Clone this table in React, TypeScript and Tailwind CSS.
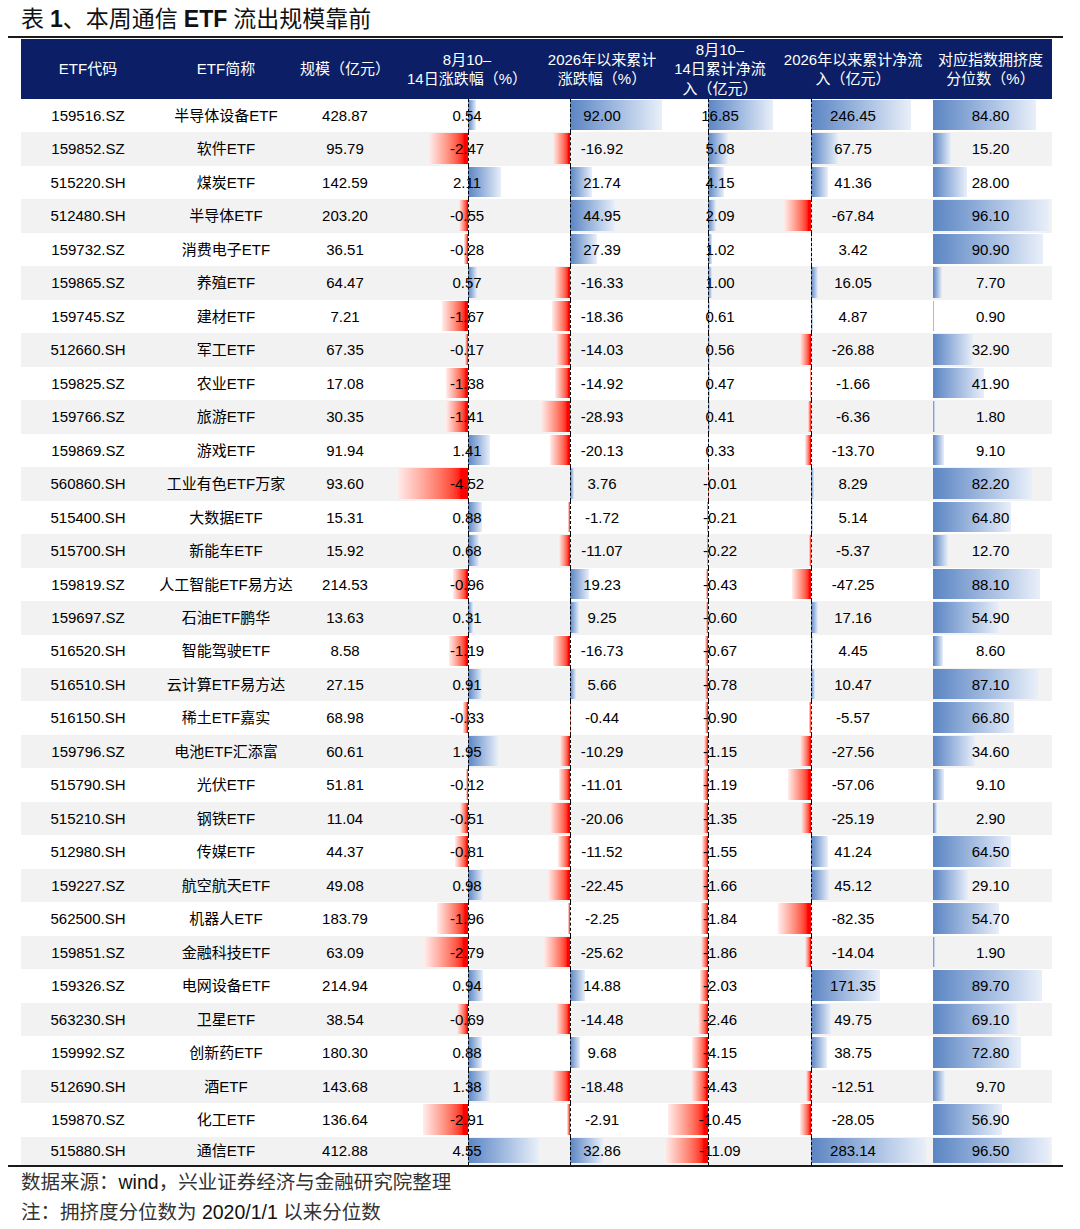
type Row = [string, string, string, number, number, number, number, number];

const rows: Row[] = [
  ["159516.SZ", "半导体设备ETF", "428.87", 0.54, 92.0, 16.85, 246.45, 84.8],
  ["159852.SZ", "软件ETF", "95.79", -2.47, -16.92, 5.08, 67.75, 15.2],
  ["515220.SH", "煤炭ETF", "142.59", 2.11, 21.74, 4.15, 41.36, 28.0],
  ["512480.SH", "半导体ETF", "203.20", -0.55, 44.95, 2.09, -67.84, 96.1],
  ["159732.SZ", "消费电子ETF", "36.51", -0.28, 27.39, 1.02, 3.42, 90.9],
  ["159865.SZ", "养殖ETF", "64.47", 0.57, -16.33, 1.0, 16.05, 7.7],
  ["159745.SZ", "建材ETF", "7.21", -1.67, -18.36, 0.61, 4.87, 0.9],
  ["512660.SH", "军工ETF", "67.35", -0.17, -14.03, 0.56, -26.88, 32.9],
  ["159825.SZ", "农业ETF", "17.08", -1.38, -14.92, 0.47, -1.66, 41.9],
  ["159766.SZ", "旅游ETF", "30.35", -1.41, -28.93, 0.41, -6.36, 1.8],
  ["159869.SZ", "游戏ETF", "91.94", 1.41, -20.13, 0.33, -13.7, 9.1],
  ["560860.SH", "工业有色ETF万家", "93.60", -4.52, 3.76, -0.01, 8.29, 82.2],
  ["515400.SH", "大数据ETF", "15.31", 0.88, -1.72, -0.21, 5.14, 64.8],
  ["515700.SH", "新能车ETF", "15.92", 0.68, -11.07, -0.22, -5.37, 12.7],
  ["159819.SZ", "人工智能ETF易方达", "214.53", -0.96, 19.23, -0.43, -47.25, 88.1],
  ["159697.SZ", "石油ETF鹏华", "13.63", 0.31, 9.25, -0.6, 17.16, 54.9],
  ["516520.SH", "智能驾驶ETF", "8.58", -1.19, -16.73, -0.67, 4.45, 8.6],
  ["516510.SH", "云计算ETF易方达", "27.15", 0.91, 5.66, -0.78, 10.47, 87.1],
  ["516150.SH", "稀土ETF嘉实", "68.98", -0.33, -0.44, -0.9, -5.57, 66.8],
  ["159796.SZ", "电池ETF汇添富", "60.61", 1.95, -10.29, -1.15, -27.56, 34.6],
  ["515790.SH", "光伏ETF", "51.81", -0.12, -11.01, -1.19, -57.06, 9.1],
  ["515210.SH", "钢铁ETF", "11.04", -0.51, -20.06, -1.35, -25.19, 2.9],
  ["512980.SH", "传媒ETF", "44.37", -0.81, -11.52, -1.55, 41.24, 64.5],
  ["159227.SZ", "航空航天ETF", "49.08", 0.98, -22.45, -1.66, 45.12, 29.1],
  ["562500.SH", "机器人ETF", "183.79", -1.96, -2.25, -1.84, -82.35, 54.7],
  ["159851.SZ", "金融科技ETF", "63.09", -2.79, -25.62, -1.86, -14.04, 1.9],
  ["159326.SZ", "电网设备ETF", "214.94", 0.94, 14.88, -2.03, 171.35, 89.7],
  ["563230.SH", "卫星ETF", "38.54", -0.69, -14.48, -2.46, 49.75, 69.1],
  ["159992.SZ", "创新药ETF", "180.30", 0.88, 9.68, -4.15, 38.75, 72.8],
  ["512690.SH", "酒ETF", "143.68", 1.38, -18.48, -4.43, -12.51, 9.7],
  ["159870.SZ", "化工ETF", "136.64", -2.91, -2.91, -10.45, -28.05, 56.9],
  ["515880.SH", "通信ETF", "412.88", 4.55, 32.86, -11.09, 283.14, 96.5],
];

// data-bar columns: width class, axis offset (px) and px per unit
const barCols = [
  { w: "w-[148px]", axisCls: "left-[75px]", ax: 75, scale: 15.6 },
  { w: "w-[122px]", axisCls: "left-[29px]", ax: 29, scale: 1.0 },
  { w: "w-[114px]", axisCls: "left-[45px]", ax: 45, scale: 3.87 },
  { w: "w-[152px]", axisCls: "left-[34px]", ax: 34, scale: 0.405 },
  { w: "w-[123px]", axisCls: "", ax: 4, scale: 1.21 },
];

const headers = [
  { w: "w-[134px]", lines: ["ETF代码"] },
  { w: "w-[142px]", lines: ["ETF简称"] },
  { w: "w-[96px]", lines: ["规模（亿元）"] },
  { w: "w-[148px]", lines: ["8月10–", "14日涨跌幅（%）"] },
  { w: "w-[122px]", lines: ["2026年以来累计", "涨跌幅（%）"] },
  { w: "w-[114px]", lines: ["8月10–", "14日累计净流", "入（亿元）"] },
  { w: "w-[152px]", lines: ["2026年以来累计净流", "入（亿元）"] },
  { w: "w-[123px]", lines: ["对应指数拥挤度", "分位数（%）"] },
];

function BarCell({ value, col }: { value: number; col: (typeof barCols)[number] }) {
  const len = Math.abs(value) * col.scale;
  const neg = value < 0;
  return (
    <div className={`relative h-full shrink-0 ${col.w}`}>
      {len > 0 && (
        <div
          className={`absolute top-[1px] bottom-[2px] ${
            neg
              ? "bg-linear-to-l from-[#ff0000] from-10% to-[#ffeded]"
              : "bg-linear-to-r from-[#5b85c3] to-[#e9eff9]"
          }`}
          style={{ left: neg ? col.ax - len : col.ax, width: Math.max(len, 1) }}
        />
      )}
      {col.axisCls && (
        <div className={`absolute top-0 bottom-0 ${col.axisCls} border-l border-dashed border-black`} />
      )}
      <div className="relative flex h-full items-center justify-center pt-[1px]">{value.toFixed(2)}</div>
    </div>
  );
}

export default function App() {
  return (
    <div className="h-[1229px] w-[1080px] bg-white font-['Liberation_Sans','Noto_Sans_CJK_SC',sans-serif] text-black">
      {/* Title */}
      <div className="flex h-[36px] items-center pl-[21px] pt-[2px] text-[23px] text-[#111]">
        表 <span className="ml-[6px] font-bold">1</span>、本周通信 <span className="mx-[6px] font-bold">ETF</span> 流出规模靠前
      </div>
      <div className="ml-[8px] h-[2px] w-[1055px] bg-[#1a1a1a]" />

      {/* Table */}
      <div className="ml-[21px] mt-[1px] w-[1031px]">
        <div className="flex h-[60px] bg-[#0c1f66] text-[15px] leading-[19.5px] text-white">
          {headers.map((h, i) => (
            <div key={i} className={`flex shrink-0 flex-col items-center justify-center text-center ${h.w}`}>
              {h.lines.map((l, j) => (
                <span key={j}>{l}</span>
              ))}
            </div>
          ))}
        </div>

        {rows.map((r, i) => (
          <div
            key={r[0]}
            className={`flex text-[15px] ${i === rows.length - 1 ? "h-[28.4px]" : "h-[33.47px]"} ${
              i % 2 === 1 ? "bg-[#f2f2f2]" : "bg-white"
            }`}
          >
            <div className="flex w-[134px] shrink-0 items-center justify-center pt-[1px]">{r[0]}</div>
            <div className="flex w-[142px] shrink-0 items-center justify-center pt-[1px]">{r[1]}</div>
            <div className="flex w-[96px] shrink-0 items-center justify-center pt-[1px]">{r[2]}</div>
            {barCols.map((c, k) => (
              <BarCell key={k} value={r[3 + k] as number} col={c} />
            ))}
          </div>
        ))}
      </div>

      <div className="ml-[8px] h-[2px] w-[1055px] bg-[#1a1a1a]" />

      {/* Footer */}
      <div className="pl-[21px] text-[19.5px] leading-[30px] text-[#333]">
        <div>
          数据来源：<span className="text-[#111]">wind</span>，兴业证券经济与金融研究院整理
        </div>
        <div>
          注：拥挤度分位数为 <span className="text-[#111]">2020/1/1</span> 以来分位数
        </div>
      </div>
    </div>
  );
}
